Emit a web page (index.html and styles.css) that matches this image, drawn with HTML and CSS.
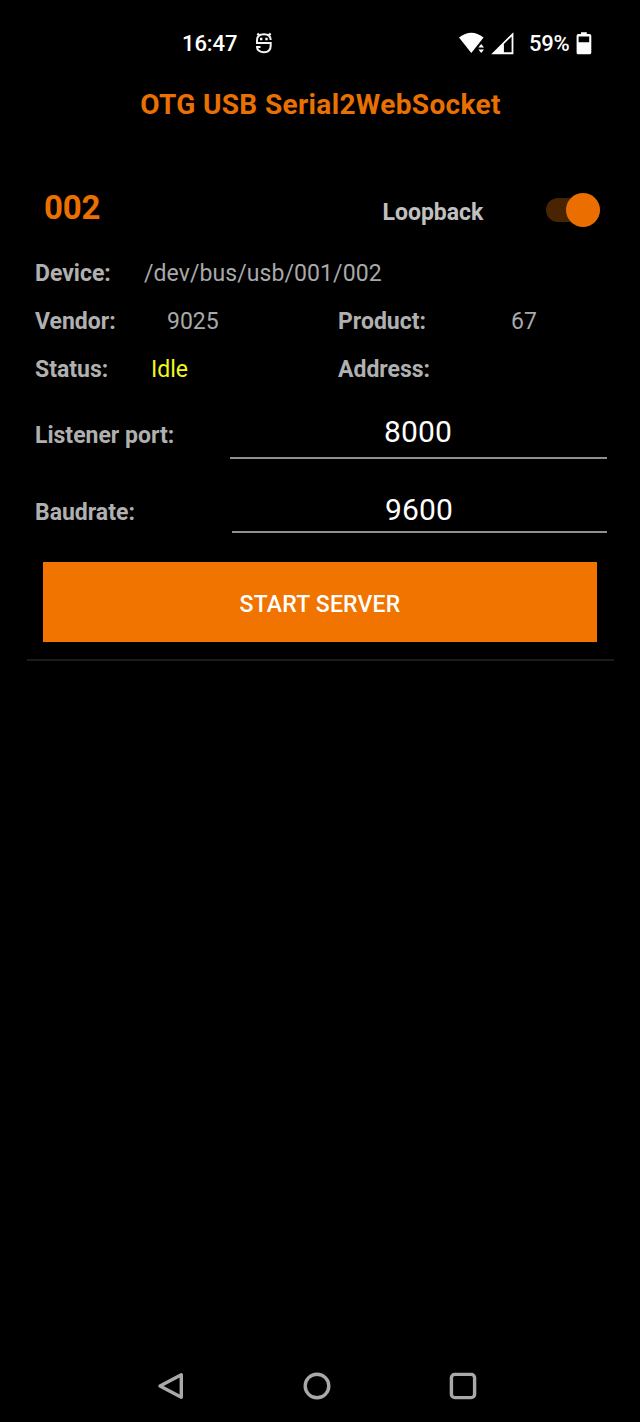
FILE: index.html
```html
<!DOCTYPE html>
<html lang="en">
<head>
<meta charset="utf-8">
<title>OTG USB Serial2WebSocket</title>
<link rel="stylesheet" href="styles.css">
</head>
<body>
<div class="screen">
  <header class="statusbar">
    <span class="clock">16:47</span>
    <svg class="icon-bot" width="18" height="24" viewBox="0 0 18 24" fill="none" stroke="#f4f4f4" stroke-width="2">
      <path d="M2 12V9C2 5 4.800 3.200 9 3.200S15.700 5 15.700 9M1 12H15.700V14.500C15.700 19 13 21.300 9 21.300S2 19 2 16H5.500"/>
      <path d="M4.300 4.300 2.400 2.500M13.700 4.300 15.600 2.500" stroke-width="2.400"/>
      <path d="M5 8h2.400M10.300 8h2.400" stroke-width="2.300"/>
    </svg>
    <svg class="icon-wifi" width="26" height="22" viewBox="0 0 26 22" fill="#fff">
      <path d="M0 5.500Q12.300-4 24.600 5.500L12.300 21Z"/>
      <path d="M22.200 11 17.800 15.800 22.200 21.800 26 16Z" fill="#000"/>
      <path d="M22.200 12 25 15.600h-5.600ZM22.200 21 25 17.400h-5.600Z"/>
    </svg>
    <svg class="icon-signal" width="23" height="23" viewBox="0 0 23 23">
      <path fill="#fff" fill-rule="evenodd" d="M22.400.2V22.300H.2ZM20.600 4.500 12.900 12V20.300H20.600Z"/>
    </svg>
    <span class="percent">59%</span>
    <svg class="icon-battery" width="16" height="23" viewBox="0 0 16 23">
      <path fill="#fff" fill-rule="evenodd" d="M5 .3H10.800V2H13.500Q15.300 2 15.300 3.800V20.700Q15.300 22.300 13.500 22.300H2.300Q.6 22.300.6 20.700V3.800Q.6 2 2.300 2H5ZM2.600 4.500V10.300H13.200V4.500Z"/>
    </svg>
  </header>

  <h1 class="title">OTG USB Serial2WebSocket</h1>

  <main class="card">
    <div class="card-head">
      <h2 class="device-id">002</h2>
      <span class="loopback">Loopback</span>
      <div class="switch"><div class="knob"></div></div>
    </div>
    <div class="row">
      <span class="label device-label">Device:</span><span class="value path">/dev/bus/usb/001/002</span>
    </div>
    <div class="row split">
      <div><span class="label vendor-label">Vendor:</span><span class="value">9025</span></div>
      <div><span class="label product-label">Product:</span><span class="value">67</span></div>
    </div>
    <div class="row split">
      <div><span class="label status-label">Status:</span><span class="value idle">Idle</span></div>
      <div><span class="label address-label">Address:</span></div>
    </div>
    <div class="field port">
      <span class="label">Listener port:</span><span class="input">8000</span>
    </div>
    <div class="field baud">
      <span class="label">Baudrate:</span><span class="input">9600</span>
    </div>
    <button class="start" type="button">START SERVER</button>
  </main>

  <nav class="navbar">
    <svg width="28" height="30" viewBox="0 0 28 30"><path d="M24.300 3.700V26.300L3 15Z"/></svg>
    <svg width="30" height="30" viewBox="0 0 30 30"><circle cx="15" cy="15" r="11.800"/></svg>
    <svg width="30" height="30" viewBox="0 0 30 30"><rect x="3.400" y="3.400" width="23.200" height="23.200" rx="3.400"/></svg>
  </nav>
</div>
</body>
</html>
```
FILE: styles.css
```css
* { box-sizing: border-box; }
body { margin: 0; background: #000; }
.screen {
  width: 640px;
  height: 1422px;
  display: flex;
  flex-direction: column;
  background: #000;
  color: #b0b0b0;
  font-family: Roboto, "Noto Sans", sans-serif;
  font-size: 23px;
  white-space: nowrap;
}
.statusbar {
  height: 56px;
  margin-top: 15px;
  padding-left: 182px;
  display: flex;
  align-items: center;
  color: #fff;
  font-weight: 500;
  font-size: 22px;
}
.clock { width: 73px; letter-spacing: -0.1px; }
.icon-wifi { margin-left: 186px; }
.icon-signal { margin-left: 6px; }
.percent { width: 47px; margin-left: 15px; letter-spacing: -0.2px; }
.title {
  margin: 0;
  height: 66px;
  line-height: 67px;
  text-align: center;
  font-size: 28px;
  font-weight: 700;
  letter-spacing: 0.35px;
  text-indent: 1px;
  color: #e97002;
}
.card {
  margin: 42px 26px 0 27px;
  height: 482px;
  border-bottom: 2px solid #1b1b1b;
  display: flex;
  flex-direction: column;
}
.card-head {
  height: 69px;
  padding-left: 17px;
  display: flex;
  align-items: flex-start;
}
.device-id {
  margin: 0;
  width: 338.5px;
  line-height: 58px;
  font-size: 33px;
  font-weight: 700;
  letter-spacing: -0.2px;
  color: #ec7000;
}
.loopback {
  width: 163px;
  line-height: 67px;
  font-weight: 700;
  color: #c0c0c0;
}
.switch {
  width: 54px;
  height: 24px;
  margin-top: 19px;
  border-radius: 12px;
  background: #4a2300;
  display: flex;
  align-items: center;
  justify-content: flex-end;
}
.knob {
  width: 34px;
  height: 34px;
  flex: none;
  border-radius: 50%;
  background: #eb6f00;
}
.row { height: 48px; line-height: 51px; padding-left: 8px; display: flex; }
.split { display: grid; grid-template-columns: 303px 1fr; }
.split > div { display: flex; }
.label { font-weight: 700; }
.value { color: #a9a9a9; }
.path { letter-spacing: 0.08px; }
.device-label { width: 109px; }
.vendor-label { width: 132px; }
.product-label { width: 173px; }
.status-label { width: 116px; }
.idle { color: #f0f81e; }
.field { margin-left: 8px; margin-right: 7px; display: flex; justify-content: space-between; }
.input {
  border-bottom: 2px solid #8f8f8f;
  text-align: center;
  color: #fff;
  font-size: 30px;
  letter-spacing: 0.2px;
  text-indent: -1px;
}
.port { height: 67px; line-height: 87px; }
.port .input { width: 377px; line-height: 80px; }
.baud { height: 74px; line-height: 108px; }
.baud .input { width: 375px; line-height: 102px; }
.start {
  margin: 29px 17px 0 16px;
  height: 80px;
  padding: 4px 0 0;
  border: 0;
  background: #f17300;
  color: #fff;
  font: 500 23px Roboto, sans-serif;
  letter-spacing: 0.2px;
}
.navbar {
  margin-top: auto;
  height: 73px;
  padding: 0 162px 0 157px;
  display: flex;
  align-items: center;
  justify-content: space-between;
}
.navbar svg { fill: none; stroke: #a9a9a9; stroke-width: 3.4; stroke-linejoin: round; }
```
